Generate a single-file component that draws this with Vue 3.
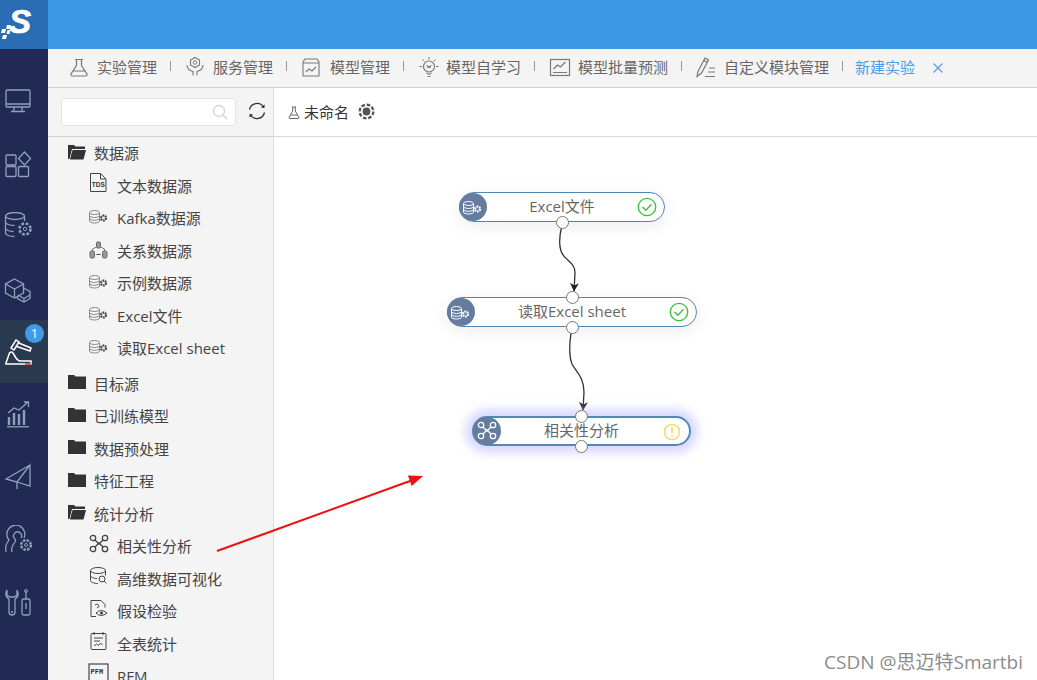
<template>
  <div class="page">
    <aside class="side">
      <div class="logo">
        <svg width="48" height="49" viewBox="0 0 48 49">
          <text x="9" y="33" class="logo-s">S</text>
          <path d="M7 25h4l-1 4H6zM2 29h4l-1 4H1zM7.500 30h3l-1 4h-3zM3 35h4l-1 4H2z" fill="#fff" />
        </svg>
      </div>
      <div v-for="(it, i) in sideIcons" :key="i" class="side-item" :class="{ on: i === 4 }">
        <svg width="28" height="28" viewBox="0 0 28 28" class="side-svg" v-html="it"></svg>
        <span v-if="i === 4" class="badge">1</span>
      </div>
    </aside>

    <div class="main">
      <header class="top"></header>
      <nav class="nav">
        <template v-for="n in navs" :key="n.text">
          <a class="nav-item">
            <svg :width="n.w" height="24" :viewBox="`0 0 ${n.w} 24`" class="nav-svg" v-html="n.icon"></svg>
            <span>{{ n.text }}</span>
          </a>
          <i class="sep"></i>
        </template>
        <a class="new-link">新建实验</a>
        <svg class="close" width="10" height="10" viewBox="0 0 10 10">
          <path d="M.5.500l9 9M9.500.500l-9 9" stroke="#5b9be0" stroke-width="1.200" fill="none" />
        </svg>
      </nav>

      <div class="body">
        <section class="left">
          <div class="search-row">
            <div class="search">
              <svg width="16" height="16" viewBox="0 0 16 16">
                <circle cx="7" cy="7" r="5.500" fill="none" stroke="#cfd4dc" stroke-width="1.300" />
                <path d="M11 11l4 4" stroke="#cfd4dc" stroke-width="1.300" />
              </svg>
            </div>
            <svg class="refresh" width="18" height="18" viewBox="0 0 18 18">
              <path d="M1.500 7.500A7.700 7.700 0 0 1 15.500 5M16.500 10.500A7.700 7.700 0 0 1 2.500 13" fill="none" stroke="#333" stroke-width="1.300" />
              <path d="M16.800 2.500l-.5 3.800-3.500-1zM1.200 15.500l.5-3.800 3.500 1z" fill="#333" />
            </svg>
          </div>
          <div class="tree">
            <div v-for="g in groups" :key="g.name" class="group">
              <div class="row folder">
                <svg width="18" height="16" viewBox="0 0 18 16">
                  <template v-if="g.open">
                    <path d="M0 1h6l1.500 1.500H17V5H4L1.500 15H0z" fill="#333" />
                    <path d="M4.500 6H18l-2.500 9.500H2z" fill="#333" />
                  </template>
                  <path v-else d="M0 1h6l1.500 1.500H18V15H0z" fill="#333" />
                </svg>
                <span>{{ g.name }}</span>
              </div>
              <div v-for="c in g.children" :key="c.name" class="row child">
                <svg width="20" height="20" viewBox="0 0 20 20" class="tree-svg" v-html="treeIcons[c.icon]"></svg>
                <span>{{ c.name }}</span>
              </div>
            </div>
          </div>
        </section>

        <section class="right">
          <div class="title-row">
            <svg class="flask" width="12" height="13" viewBox="0 0 12 13">
              <path d="M4 1h4M4.700 1v4L1 11.500q0 1 1 1h8q1 0 1-1L7.300 5V1M3 9h6" fill="none" stroke="#666" />
            </svg>
            <span class="title">未命名</span>
            <svg class="gear" width="17" height="17" viewBox="0 0 17 17">
              <circle cx="8.500" cy="8.500" r="6.700" fill="none" stroke="#555" stroke-width="2.600" stroke-dasharray="3.500 1.760" />
              <circle cx="8.500" cy="8.500" r="5.600" fill="#fff" />
              <circle cx="8.500" cy="8.500" r="3.900" fill="#555" />
            </svg>
          </div>
          <div class="canvas">
            <svg class="edges" width="763" height="543" viewBox="0 0 763 543">
              <defs>
                <marker id="tip" markerWidth="10" markerHeight="10" refX="8" refY="5" orient="auto" markerUnits="userSpaceOnUse">
                  <path d="M0 .5L8.500 5L0 9.500L2.500 5Z" fill="#222" />
                </marker>
              </defs>
              <path d="M288 88C285 100 285 108 287 114C290 124 301 124 301 136L300 154" fill="none" stroke="#333" stroke-width="1.300" marker-end="url(#tip)" />
              <path d="M297 196C295 210 295 220 298 227C302 235 310 240 310 255L309 273" fill="none" stroke="#333" stroke-width="1.300" marker-end="url(#tip)" />
            </svg>
            <div
              v-for="n in nodes"
              :key="n.name"
              class="node"
              :class="{ active: n.active }"
              :style="{ left: n.x + 'px', top: n.y + 'px', width: n.w + 'px' }"
            >
              <span class="node-icon">
                <svg width="20" height="20" viewBox="0 0 20 20" v-html="n.active ? treeIcons.corr : treeIcons.db"></svg>
              </span>
              <span class="node-name">{{ n.name }}</span>
              <svg v-if="!n.active" class="state" width="20" height="20" viewBox="0 0 20 20">
                <circle cx="10" cy="10" r="8.700" fill="none" stroke="#35c13f" stroke-width="1.300" />
                <path d="M5.500 10l3.300 3.300 5.700-6" fill="none" stroke="#35c13f" stroke-width="1.300" />
              </svg>
              <svg v-else class="state" width="20" height="20" viewBox="0 0 20 20">
                <circle cx="10" cy="10" r="7.500" fill="none" stroke="#fbd977" stroke-width="1.700" />
                <path d="M10 5.500v5.500M10 12.700v1.600" stroke="#fbd977" stroke-width="2" />
              </svg>
              <i v-if="n.inPort" class="port in"></i>
              <i class="port out"></i>
            </div>
            <div class="mark">CSDN @思迈特Smartbi</div>
          </div>
        </section>
      </div>
    </div>

    <svg class="red-arrow" width="1037" height="680" viewBox="0 0 1037 680">
      <path d="M217 551L410 481" stroke="#f01010" stroke-width="2" fill="none" />
      <path d="M423 476L411.700 486L407.900 475.600Z" fill="#f01010" />
    </svg>
  </div>
</template>

<script setup>
const db = `<ellipse cx="5.500" cy="6.500" rx="5" ry="2" fill="none" style="stroke:var(--cyl,currentColor)"/><path d="M.5 6.500v8.500c0 1.100 2.200 2 5 2s5-.9 5-2V6.500M.5 9.500c0 1.100 2.200 2 5 2s5-.9 5-2M.5 12.300c0 1.100 2.200 2 5 2s5-.9 5-2" fill="none" style="stroke:var(--cyl,currentColor)"/><circle cx="14.500" cy="12" r="2.500" fill="none" stroke="currentColor" stroke-width="2.200" stroke-dasharray="1.800 .8"/>`;

const treeIcons = {
  db,
  tds: `<path d="M1.500 .5h10l5.500 5.500v12.500H1.500zM11.500 .5V6H17" fill="none" stroke="#444"/><text x="2.800" y="14" font-size="6.500" font-weight="700" font-family="Liberation Sans" fill="#333">TDS</text>`,
  rel: `<rect x="7.500" y="4" width="4" height="6" rx="1.200" fill="#999" stroke="#666"/><rect x="1" y="13" width="4.500" height="7" rx="1.500" fill="#999" stroke="#666"/><rect x="13.500" y="13" width="4.500" height="7" rx="1.500" fill="#999" stroke="#666"/><path d="M7.500 16.500h4" stroke="#444"/><path d="M3.500 13v-2l4-2M15.500 13v-2l-4-2" fill="none" stroke="#777"/>`,
  corr: `<circle cx="4" cy="4" r="2.700" fill="none" stroke="currentColor" stroke-width="1.300"/><circle cx="16" cy="4" r="2.700" fill="none" stroke="currentColor" stroke-width="1.300"/><circle cx="4" cy="15" r="2.700" fill="none" stroke="currentColor" stroke-width="1.300"/><circle cx="16" cy="15" r="2.700" fill="none" stroke="currentColor" stroke-width="1.300"/><path d="M6 6l4 4 4-4M6 13l4-4 4 4" fill="none" stroke="currentColor" stroke-width="1.300"/>`,
  hd: `<ellipse cx="9" cy="4.500" rx="7.500" ry="3" fill="none" stroke="#444"/><path d="M1.500 4.500v10c0 1.700 3.400 3 7.500 3M16.500 4.500v5M1.500 9.500c0 1.700 3.400 3 6.500 3" fill="none" stroke="#444"/><circle cx="13" cy="13" r="3" fill="none" stroke="#444"/><path d="M15 15l2.500 2.500" stroke="#444"/>`,
  test: `<path d="M2 1.500h10l4 4v3M2 1.500v16h5" fill="none" stroke="#444"/><path d="M6 6q2-2 3.500 0t-1.500 3" fill="none" stroke="#444"/><path d="M7 14q5-5 11 0q-6 5-11 0z" fill="none" stroke="#444"/><circle cx="12.500" cy="14" r="1.600" fill="#444"/>`,
  stat: `<rect x="2" y="2.500" width="15" height="16" rx="1" fill="none" stroke="#444"/><path d="M5 1v3M14 1v3M5 7h9M5 10h6M5 15l2.500-2 2 1.500 2-2.500 2 2" fill="none" stroke="#444"/>`,
  rfm: `<rect x="0" y="0" width="19" height="19" fill="none" stroke="#444" stroke-width="1.200"/><text x="1.500" y="10" font-size="7" font-weight="700" font-family="Liberation Mono" fill="#333">PFM</text>`,
};

const sideIcons = [
  `<rect x="2" y="3" width="24" height="17" rx="1" fill="none" stroke="currentColor" stroke-width="1.300"/><path d="M2 17h24M10 20v4M18 20v4M7 24.500h14" fill="none" stroke="currentColor" stroke-width="1.300"/>`,
  `<rect x="2" y="5" width="10" height="10" rx="1" fill="none" stroke="currentColor" stroke-width="1.300"/><path d="M20.500 2l6 6.500-6 6.500-6-6.500z" fill="none" stroke="currentColor" stroke-width="1.300"/><rect x="2" y="16.500" width="10" height="10" rx="1" fill="none" stroke="currentColor" stroke-width="1.300"/><rect x="14.500" y="16.500" width="10" height="10" rx="1" fill="none" stroke="currentColor" stroke-width="1.300"/>`,
  `<ellipse cx="11" cy="4" rx="9.500" ry="3.500" fill="none" stroke="currentColor" stroke-width="1.300"/><path d="M1.500 4v17c0 2 4 3.500 9 3.500M20.500 4v5M1.500 10c0 2 4 3.500 9 3.500M1.500 16c0 2 4 3.500 8 3.500" fill="none" stroke="currentColor" stroke-width="1.300"/><circle cx="21" cy="17" r="5.500" fill="none" stroke="currentColor" stroke-width="2.600" stroke-dasharray="2.700 1.620"/><circle cx="21" cy="17" r="1.700" fill="none" stroke="currentColor"/>`,
  `<path d="M10.500 4l9 5v9l-9 5-9-5V9zM1.500 9l9 5 9-5M10.500 14v9" fill="none" stroke="currentColor" stroke-width="1.300"/><path d="M19.500 13l6.500 3.500v7L20 27l-6.500-3.500v-2M14 20l6 3.500 6-3.500M20 23.500V27" fill="none" stroke="currentColor" stroke-width="1.300"/>`,
  `<path d="M7 10L12 2l3 2-5 8zM13.500 4.500L27 10l-1 3L11.500 8" fill="none" stroke="#fff" stroke-width="1.500"/><path d="M2 25L5.500 15q2-2 3.500 0l3 5q2 3 5 3h10v3H2z" fill="none" stroke="#fff" stroke-width="1.500"/><path d="M21 26h6" stroke="#e04040" stroke-width="1.600"/>`,
  `<path d="M5 25V17M10 25V13M15 25V14M20 25V10" stroke="currentColor" stroke-width="2.400"/><path d="M3 26.800h22" stroke="currentColor" stroke-width="1.300"/><path d="M4 13l6-5 5 2 9-8M20 2h4.500v5" fill="none" stroke="currentColor" stroke-width="1.300"/>`,
  `<path d="M26 2L2 16l11 3v7M13 19l13 4V2L13 19" fill="none" stroke="currentColor" stroke-width="1.300"/>`,
  `<path d="M2 27q-1-6 1-9l2-3a9 9 0 1 1 15-2M8 27q-1-4 1-7l2-3q1-2 0-3a4 4 0 1 1 6-1" fill="none" stroke="currentColor" stroke-width="1.300"/><circle cx="22" cy="20" r="4.800" fill="none" stroke="currentColor" stroke-width="2.500" stroke-dasharray="2.500 1.270"/><circle cx="22" cy="20" r="1.500" fill="none" stroke="currentColor"/>`,
  `<path d="M3 2q-3 6 2 9v13q0 3 3 3t3-3V11q5-3 2-9v5l-3 2H6L3 7z" fill="none" stroke="currentColor" stroke-width="1.300"/><circle cx="8" cy="24" r="1" fill="currentColor"/><rect x="18" y="11" width="8" height="16" rx="1.500" fill="none" stroke="currentColor" stroke-width="1.300"/><path d="M22 3v8M22 15v6" stroke="currentColor" stroke-width="1.300"/><circle cx="22" cy="3" r="1.500" fill="none" stroke="currentColor"/>`,
];

const navs = [
  { text: "实验管理", w: 18, icon: `<path d="M5 5.500h8M6.500 5.500v6L1 20q-.5 2 1.500 2h13q2 0 1.500-2L11.500 11.500v-6M3.500 17h11" fill="none" stroke="#777" stroke-width="1.200"/>` },
  { text: "服务管理", w: 18, icon: `<path d="M9 3.500l4.500 2.500v5L9 13.500 4.500 11V6z" fill="none" stroke="#777" stroke-width="1.100"/><circle cx="9" cy="8.500" r="1.800" fill="none" stroke="#777"/><path d="M1 11q0 5 6 6.500v4M17 11q0 5-6 6.500v4" fill="none" stroke="#777" stroke-width="1.100"/>` },
  { text: "模型管理", w: 19, icon: `<path d="M1 8l2-3h12l2 3v14H1zM1 9h16M4 18l3-3 3 2 4-4" fill="none" stroke="#777" stroke-width="1.100"/>` },
  { text: "模型自学习", w: 18, icon: `<circle cx="10" cy="12.500" r="5.500" fill="none" stroke="#777" stroke-width="1.200"/><path d="M8 18.500v1.500h4v-1.500M8.500 22.500h3M10 3v2.500M3.500 5.500l1.800 1.800M16.500 5.500l-1.800 1.800M.5 12.500h2.500M17 12.500h2.500M8 11l1 3 1-2 1 2 1-3" fill="none" stroke="#777" stroke-width="1"/>` },
  { text: "模型批量预测", w: 19, icon: `<rect x=".5" y="5.500" width="19" height="16" fill="none" stroke="#777" stroke-width="1.200"/><path d="M3.500 15l4-4 3 2 5-5M3 18.500h14" fill="none" stroke="#777" stroke-width="1.200"/>` },
  { text: "自定义模块管理", w: 18, icon: `<path d="M0 22.500l1-5L8 4l3.500 2-7 13zM7 6.500l3.500 2" fill="none" stroke="#777" stroke-width="1.200"/><path d="M12 14h6M11 18h7M8 22.500h10" stroke="#777" stroke-width="1.200"/>` },
];

const groups = [
  {
    name: "数据源",
    open: true,
    children: [
      { name: "文本数据源", icon: "tds" },
      { name: "Kafka数据源", icon: "db" },
      { name: "关系数据源", icon: "rel" },
      { name: "示例数据源", icon: "db" },
      { name: "Excel文件", icon: "db" },
      { name: "读取Excel sheet", icon: "db" },
    ],
  },
  { name: "目标源", children: [] },
  { name: "已训练模型", children: [] },
  { name: "数据预处理", children: [] },
  { name: "特征工程", children: [] },
  {
    name: "统计分析",
    open: true,
    children: [
      { name: "相关性分析", icon: "corr" },
      { name: "高维数据可视化", icon: "hd" },
      { name: "假设检验", icon: "test" },
      { name: "全表统计", icon: "stat" },
      { name: "RFM", icon: "rfm" },
    ],
  },
];

const nodes = [
  { name: "Excel文件", x: 185, y: 55, w: 206 },
  { name: "读取Excel sheet", x: 173, y: 160, w: 250, inPort: true },
  { name: "相关性分析", x: 198, y: 279, w: 219, inPort: true, active: true },
];
</script>

<style>
html,
body {
  margin: 0;
  height: 100%;
  overflow: hidden;
  background: #fff;
}
</style>

<style scoped>
.page {
  position: relative;
  display: flex;
  width: 1037px;
  height: 680px;
  overflow: hidden;
  font-family: "Open Sans", "Noto Sans CJK SC", sans-serif;
  font-size: 15px;
}
.red-arrow {
  position: absolute;
  left: 0;
  top: 0;
  pointer-events: none;
}
.side {
  width: 48px;
  flex: none;
  background: #212a52;
  color: #8ea1bb;
}
.logo {
  height: 49px;
  margin-bottom: 21px;
  background: #2a6db5;
  overflow: hidden;
}
.logo svg {
  display: block;
}
.logo-s {
  font-family: "Liberation Sans", sans-serif;
  font-size: 33px;
  font-weight: 700;
  font-style: italic;
  fill: #fff;
  stroke: #fff;
  stroke-width: 0.7px;
}
.side-item {
  position: relative;
  height: 62.6px;
  display: flex;
  align-items: center;
  padding-left: 4px;
  box-sizing: border-box;
}
.side-item.on {
  background: #29394f;
}
.badge {
  position: absolute;
  left: 25px;
  top: 4px;
  width: 19px;
  height: 19px;
  border-radius: 50%;
  background: #3f9be8;
  color: #fff;
  font-size: 13px;
  line-height: 19px;
  text-align: center;
}
.main {
  flex: 1;
  min-width: 0;
  display: flex;
  flex-direction: column;
}
.top {
  height: 49px;
  flex: none;
  background: #3d99e6;
}
.nav {
  height: 39px;
  box-sizing: border-box;
  flex: none;
  display: flex;
  align-items: center;
  padding: 0 0 4px 22px;
  background: #f4f4f4;
  border-bottom: 1px solid #cfcfcf;
  color: #666;
}
.nav-item {
  display: flex;
  align-items: center;
  gap: 9px;
  white-space: nowrap;
}
.nav-svg {
  display: block;
  overflow: visible;
}
.sep {
  width: 1px;
  height: 10px;
  margin: 0 15px 0 13px;
  background: #999;
}
.sep:last-of-type {
  margin-right: 12px;
}
.new-link {
  color: #4e9be6;
  white-space: nowrap;
}
.close {
  margin-left: 18px;
  margin-top: 3px;
}
.body {
  flex: 1;
  min-height: 0;
  display: flex;
}
.left {
  width: 226px;
  flex: none;
  box-sizing: border-box;
  background: #f4f4f4;
  border-right: 1px solid #ddd;
  overflow: hidden;
}
.search-row {
  height: 49px;
  box-sizing: border-box;
  display: flex;
  align-items: center;
  padding-left: 13px;
  gap: 12px;
  border-bottom: 1px solid #d2d2d2;
}
.search {
  width: 175px;
  height: 28px;
  flex: none;
  display: flex;
  align-items: center;
  justify-content: flex-end;
  padding-right: 7px;
  box-sizing: border-box;
  background: #fff;
  border: 1px solid #e0e3ea;
  border-radius: 4px;
}
.refresh {
  flex: none;
  margin-top: -3px;
}
.tree {
  padding-top: 0.5px;
  color: #444;
  white-space: nowrap;
}
.group {
  margin-bottom: 3px;
}
.group:nth-child(n + 2):nth-child(-n + 5) {
  margin-bottom: 0;
}
.row {
  height: 32.5px;
  box-sizing: border-box;
  padding-bottom: 2px;
  display: flex;
  align-items: center;
}
.folder {
  padding-left: 20px;
  gap: 8px;
}
.folder svg {
  margin-top: -2px;
}
.child {
  padding-left: 41px;
  gap: 8px;
}
.tree-svg {
  --cyl: #888;
  flex: none;
  color: #444;
  margin-top: -4px;
  overflow: visible;
}
.right {
  flex: 1;
  min-width: 0;
  display: flex;
  flex-direction: column;
  background: #fff;
}
.title-row {
  height: 49px;
  box-sizing: border-box;
  flex: none;
  display: flex;
  align-items: center;
  padding: 0 0 2px 14px;
  border-bottom: 1px solid #d9d9d9;
  color: #333;
}
.flask {
  margin-top: 2px;
}
.title {
  margin-left: 4px;
}
.gear {
  margin-left: 9px;
}
.canvas {
  position: relative;
  flex: 1;
  overflow: hidden;
}
.edges {
  position: absolute;
  left: 0;
  top: 0;
  overflow: visible;
}
.node {
  position: absolute;
  height: 30px;
  box-sizing: border-box;
  display: flex;
  align-items: center;
  justify-content: center;
  background: #fff;
  border: 1px solid #4f87b4;
  border-radius: 15px;
  box-shadow: 0 4px 18px rgba(0, 0, 0, 0.08);
  color: #666;
}
.node.active {
  border-width: 2px;
  border-color: #4f8ab8;
  box-shadow: 0 0 10px 7px rgba(190, 190, 255, 0.6);
}
.node-icon {
  position: absolute;
  left: -1px;
  top: 0;
  width: 28px;
  height: 28px;
  border-radius: 50%;
  background: #667c9e;
  color: #fff;
  display: flex;
  align-items: center;
  justify-content: center;
}
.node-icon svg {
  overflow: visible;
}
.node.active .node-icon {
  top: -1px;
}
.node-name {
  white-space: nowrap;
  padding-bottom: 3px;
}
.state {
  position: absolute;
  right: 7px;
  top: 4px;
}
.port {
  position: absolute;
  left: 50%;
  width: 13px;
  height: 13px;
  margin-left: -6.5px;
  box-sizing: border-box;
  background: #fff;
  border: 1px solid #777;
  border-radius: 50%;
}
.port.in {
  top: -7.5px;
}
.port.out {
  bottom: -7.5px;
}
.active .port.in {
  top: -8.5px;
}
.active .port.out {
  bottom: -8.5px;
}
.mark {
  position: absolute;
  right: 14px;
  bottom: 5px;
  color: #8c8c8c;
  font-size: 19px;
  white-space: nowrap;
}
</style>
